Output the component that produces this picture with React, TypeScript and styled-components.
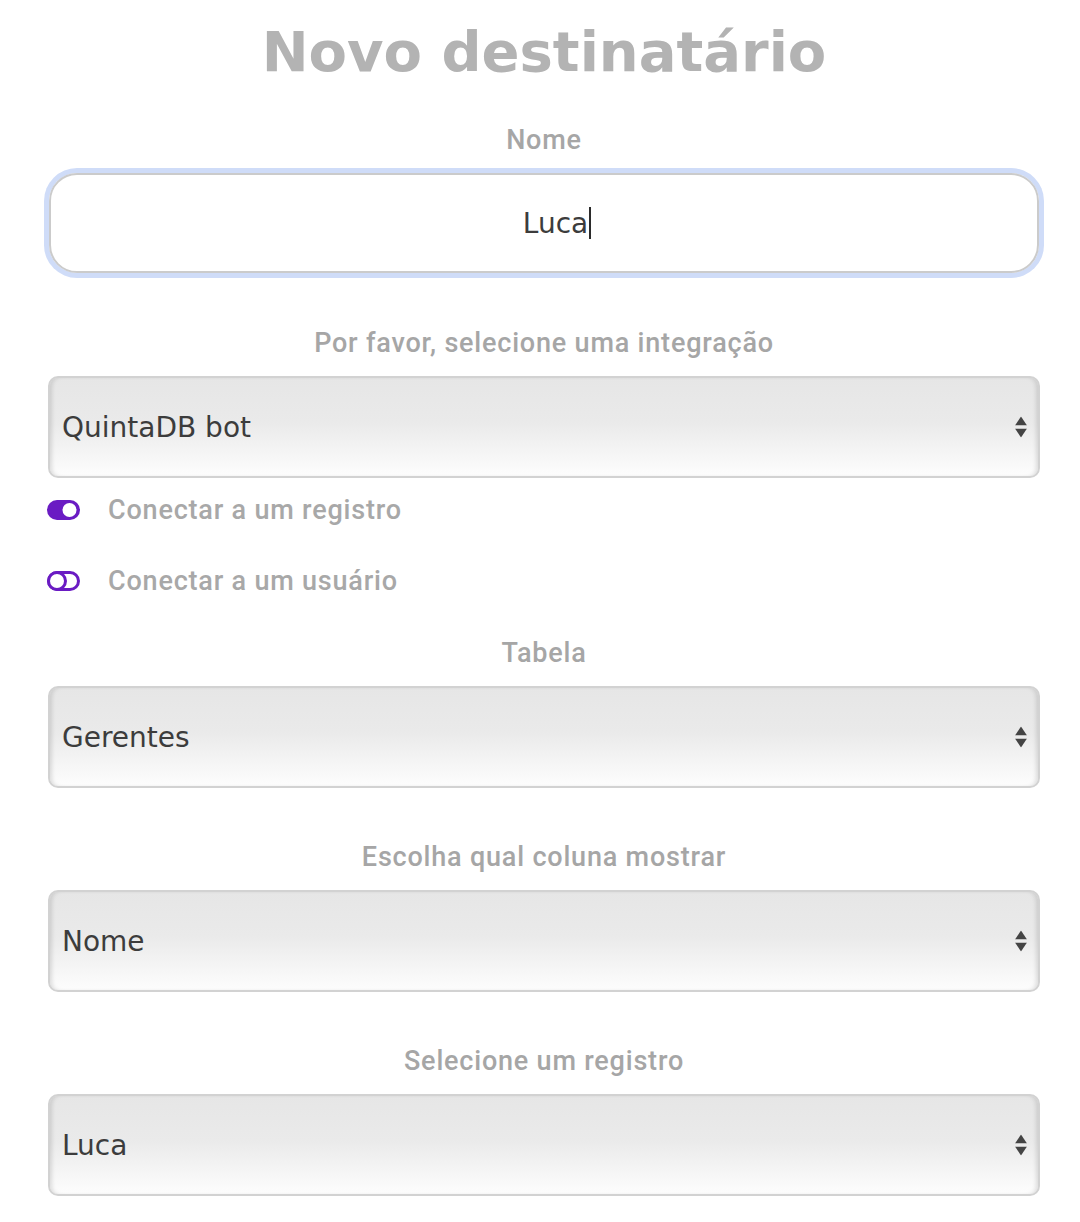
import React from 'react';
import styled, { createGlobalStyle } from 'styled-components';

const GlobalStyle = createGlobalStyle`
  body {
    margin: 0;
    padding: 0 0 0 8px;
    background: #ffffff;
  }
`;

const Page = styled.div`
  width: 992px;
  margin: 0 auto;
  display: flex;
  flex-direction: column;
  padding-bottom: 30px;
`;

const Title = styled.h1`
  margin: 20px 0 0;
  text-align: center;
  font-family: 'DejaVu Sans', sans-serif;
  font-weight: 700;
  font-size: 56px;
  line-height: 64px;
  color: #b3b3b3;
`;

const Field = styled.div<{ $top: number }>`
  display: flex;
  flex-direction: column;
  margin-top: ${p => p.$top}px;
`;

const Label = styled.label`
  display: block;
  text-align: center;
  font-family: Roboto, 'Liberation Sans', sans-serif;
  font-weight: 500;
  font-size: 27px;
  letter-spacing: 0.8px;
  line-height: 30px;
  color: #a6a6a6;
  margin-bottom: 18px;
`;

const TextInput = styled.div`
  box-sizing: border-box;
  height: 100px;
  margin: 0 1px;
  padding-left: 26px;
  border: 2px solid #cbcbcb;
  border-radius: 28px;
  box-shadow: 0 0 0 5px #cfdcf8;
  display: flex;
  align-items: center;
  justify-content: center;
  font-family: 'DejaVu Sans', sans-serif;
  font-size: 28px;
  color: #3c3c3c;
`;

const Caret = styled.span`
  display: inline-block;
  width: 2px;
  height: 32px;
  margin-left: 1px;
  background: #2b2b2b;
`;

const SelectBox = styled.div`
  position: relative;
  box-sizing: border-box;
  height: 102px;
  border: 2px solid #d2d2d2;
  border-radius: 10px;
  background: linear-gradient(to bottom, #e6e6e6 0%, #eaeaea 45%, #fdfdfd 100%);
  box-shadow: inset 4px 0 4px -2px rgba(0, 0, 0, 0.12),
    inset -4px 0 4px -2px rgba(0, 0, 0, 0.12);
  display: flex;
  align-items: center;
  padding-left: 12px;
  font-family: 'DejaVu Sans', sans-serif;
  font-size: 28px;
  color: #3c3c3c;
`;

const Arrows = styled.span`
  position: absolute;
  right: 11px;
  top: 50%;
  transform: translateY(-50%);
  display: flex;
  flex-direction: column;
  gap: 3px;
`;

const ToggleRow = styled.div<{ $top: number }>`
  display: flex;
  align-items: center;
  height: 40px;
  margin-top: ${p => p.$top}px;
  margin-left: -1px;
  gap: 28px;
  font-family: Roboto, 'Liberation Sans', sans-serif;
  font-weight: 500;
  font-size: 27px;
  letter-spacing: 0.8px;
  color: #a8a8a8;
`;

const ToggleIcon = ({ on }: { on: boolean }) =>
  on ? (
    <svg width="33" height="20" viewBox="0 0 33 20">
      <rect x="0" y="0" width="33" height="20" rx="10" fill="#6a1bc3" />
      <circle cx="22.5" cy="10" r="7" fill="#ffffff" />
    </svg>
  ) : (
    <svg width="33" height="20" viewBox="0 0 33 20">
      <rect x="1.5" y="1.5" width="30" height="17" rx="8.5" fill="none" stroke="#6a1bc3" strokeWidth="3" />
      <circle cx="10" cy="10" r="8.5" fill="#ffffff" stroke="#6a1bc3" strokeWidth="3" />
    </svg>
  );

const SelectArrows = () => (
  <Arrows>
    <svg width="12" height="9" viewBox="0 0 12 9">
      <path d="M6 0 L12 9 L0 9 Z" fill="#444" />
    </svg>
    <svg width="12" height="9" viewBox="0 0 12 9">
      <path d="M0 0 L12 0 L6 9 Z" fill="#444" />
    </svg>
  </Arrows>
);

const Select = ({ value }: { value: string }) => (
  <SelectBox>
    {value}
    <SelectArrows />
  </SelectBox>
);

export default function App() {
  return (
    <>
      <GlobalStyle />
      <Page>
        <Title>Novo destinatário</Title>

        <Field $top={41}>
          <Label>Nome</Label>
          <TextInput>
            Luca
            <Caret />
          </TextInput>
        </Field>

        <Field $top={55}>
          <Label>Por favor, selecione uma integração</Label>
          <Select value="QuintaDB bot" />
        </Field>

        <ToggleRow $top={12}>
          <ToggleIcon on />
          Conectar a um registro
        </ToggleRow>
        <ToggleRow $top={31}>
          <ToggleIcon on={false} />
          Conectar a um usuário
        </ToggleRow>

        <Field $top={37}>
          <Label>Tabela</Label>
          <Select value="Gerentes" />
        </Field>

        <Field $top={54}>
          <Label>Escolha qual coluna mostrar</Label>
          <Select value="Nome" />
        </Field>

        <Field $top={54}>
          <Label>Selecione um registro</Label>
          <Select value="Luca" />
        </Field>
      </Page>
    </>
  );
}
